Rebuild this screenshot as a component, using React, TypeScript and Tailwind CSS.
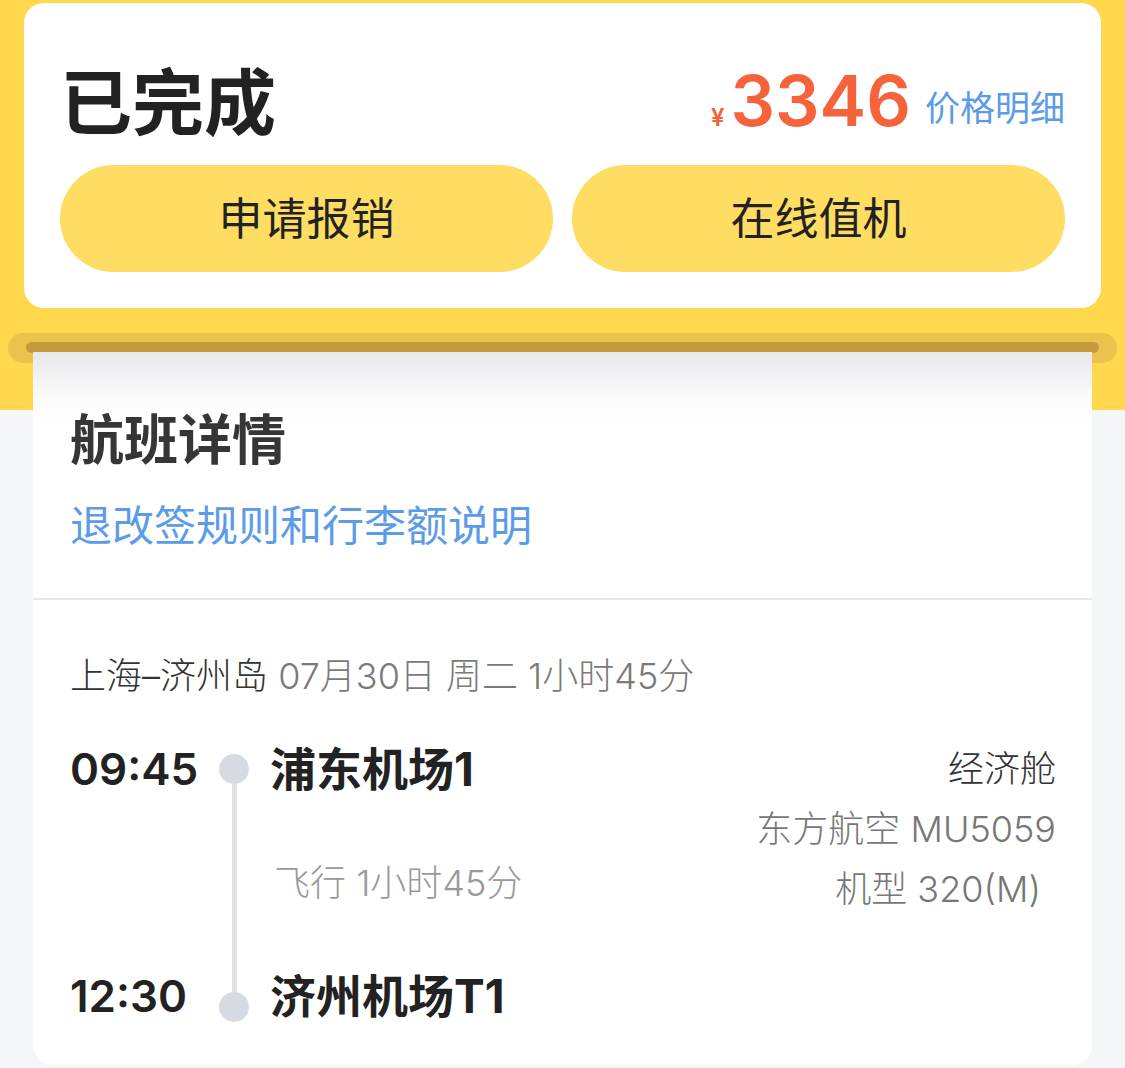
import React from 'react';

const font = { fontFamily: 'Inter, "Noto Sans CJK SC", sans-serif' };

function ActionButton({ label }: { label: string }) {
  return (
    <button className="flex-1 h-[107px] rounded-full bg-[#FFDD63] text-[44px] leading-none text-[#222]">
      {label}
    </button>
  );
}

function StatusCard() {
  return (
    <div className="bg-white rounded-[20px] h-[305px] pt-[58px] px-[36px]">
      <div className="flex items-center justify-between h-[84px]">
        <div className="text-[72px] leading-none font-bold text-[#222]">已完成</div>
        <div className="flex items-baseline">
          <span className="text-[24px] text-[#F6623A] font-semibold mr-[6px]">¥</span>
          <span className="text-[70px] leading-none font-semibold text-[#F6623A]">3346</span>
          <span className="relative -top-[5px] text-[35px] text-[#5B9BEA] ml-[14px]">价格明细</span>
        </div>
      </div>
      <div className="flex gap-[19px] mt-[20px]">
        <ActionButton label="申请报销" />
        <ActionButton label="在线值机" />
      </div>
    </div>
  );
}

function PrinterSlot() {
  return (
    <div className="mt-[25px] mx-[8px] h-[30px] rounded-full bg-[#EBC34C] pt-[9px] px-[18px]">
      <div className="h-[11px] rounded-full bg-[#C59A40]" />
    </div>
  );
}

function FlightTimeline() {
  return (
    <div className="flex mt-[47px] h-[283px]">
      <div className="w-[149px] flex flex-col justify-between">
        <div className="leading-[56px] text-[44px] font-semibold text-[#222]">09:45</div>
        <div className="leading-[56px] text-[44px] font-semibold text-[#222]">12:30</div>
      </div>
      <div className="w-[30px] flex flex-col items-center pt-[13px] pb-[2px]">
        <div className="w-[30px] h-[30px] rounded-full bg-[#D5DAE3]" />
        <div className="w-[5px] flex-1 bg-[#DDE1E8]" />
        <div className="w-[30px] h-[30px] rounded-full bg-[#D5DAE3]" />
      </div>
      <div className="ml-[21px] flex flex-col justify-between">
        <div className="leading-[56px] text-[46px] font-bold text-[#222]">浦东机场1</div>
        <div className="leading-[40px] text-[36px] font-light text-[#999] pl-[4px]">飞行 1小时45分</div>
        <div className="leading-[56px] text-[46px] font-bold text-[#222]">济州机场T1</div>
      </div>
      <div className="flex-1 text-right text-[36px] font-light leading-[60px] -mt-[2px]">
        <div className="text-[#333]">经济舱</div>
        <div className="text-[#777]">东方航空 MU5059</div>
        <div className="text-[#777] pr-[15px]">机型 320(M)</div>
      </div>
    </div>
  );
}

function DetailCard() {
  return (
    <div className="relative z-10 -mt-[11px] mx-[33px] rounded-b-[20px] bg-[linear-gradient(to_bottom,#e8e8eb,#fbfbfc_45px,#ffffff_70px)] pb-[41px]">
      <div className="px-[37px] pt-[62px]">
        <div className="text-[54px] leading-none font-bold text-[#363636]">航班详情</div>
        <div className="mt-[37px] text-[42px] leading-none text-[#5B9BEA]">退改签规则和行李额说明</div>
      </div>
      <div className="mt-[51px] h-[2px] bg-[#E8E8E8]" />
      <div className="px-[37px] pr-[36px]">
        <div className="mt-[58px] text-[36px] leading-none font-light">
          <span className="text-[#333]">上海–济州岛</span>
          <span className="text-[#7a7a7a]"> 07月30日 周二 1小时45分</span>
        </div>
        <FlightTimeline />
      </div>
    </div>
  );
}

export default function App() {
  return (
    <div
      style={font}
      className="w-[1125px] h-[1068px] overflow-hidden bg-[linear-gradient(to_bottom,#FFD84E_410px,#F5F6F8_410px)]"
    >
      <div className="pt-[3px] px-[24px]">
        <StatusCard />
      </div>
      <PrinterSlot />
      <DetailCard />
    </div>
  );
}
